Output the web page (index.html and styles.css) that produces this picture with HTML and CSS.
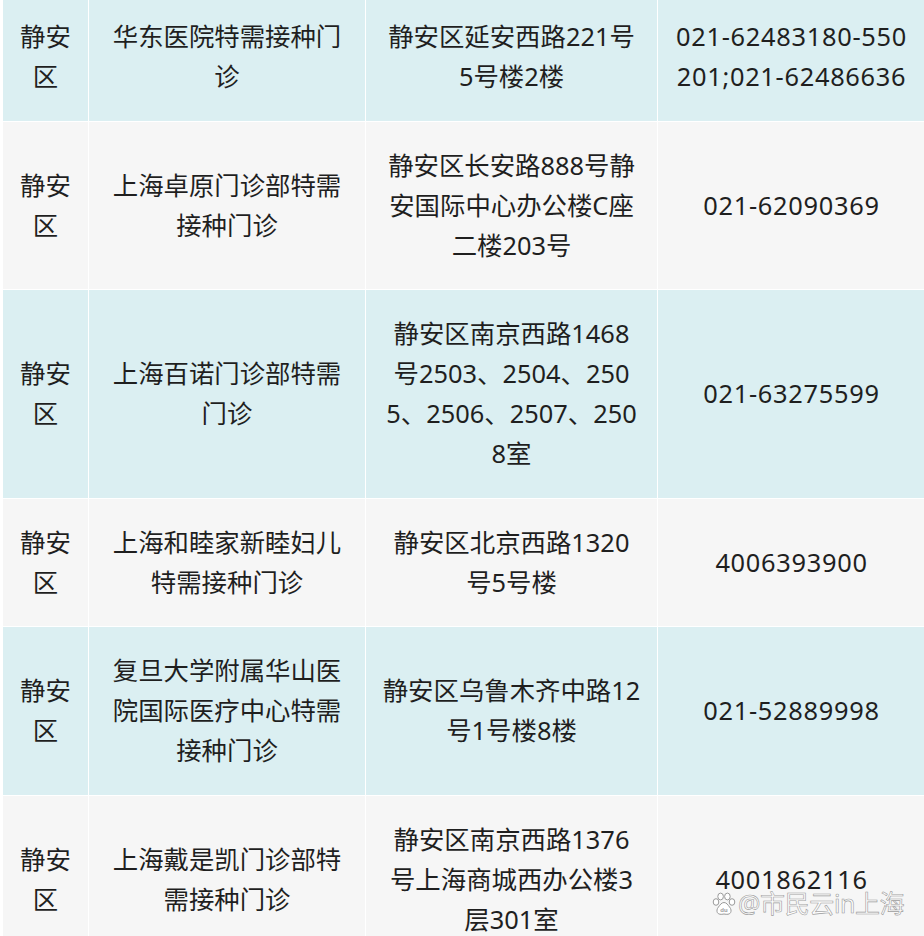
FILE: index.html
```html
<!DOCTYPE html>
<html lang="zh-CN">
<head>
<meta charset="utf-8">
<title>静安区特需接种门诊</title>
<link rel="stylesheet" href="styles.css">
</head>
<body>
<div class="page">
  <table class="clinics">
    <colgroup>
      <col class="c-district">
      <col class="c-name">
      <col class="c-addr">
      <col class="c-phone">
    </colgroup>
    <tbody>
      <tr class="teal">
        <td>静安<br>区</td>
        <td>华东医院特需接种门<br>诊</td>
        <td>静安区延安西路221号<br>5号楼2楼</td>
        <td class="phone">021-62483180-550<br>201;021-62486636</td>
      </tr>
      <tr class="gray">
        <td>静安<br>区</td>
        <td>上海卓原门诊部特需<br>接种门诊</td>
        <td>静安区长安路888号静<br>安国际中心办公楼C座<br>二楼203号</td>
        <td class="phone">021-62090369</td>
      </tr>
      <tr class="teal">
        <td>静安<br>区</td>
        <td>上海百诺门诊部特需<br>门诊</td>
        <td>静安区南京西路1468<br>号2503、2504、250<br>5、2506、2507、250<br>8室</td>
        <td class="phone">021-63275599</td>
      </tr>
      <tr class="gray">
        <td>静安<br>区</td>
        <td>上海和睦家新睦妇儿<br>特需接种门诊</td>
        <td>静安区北京西路1320<br>号5号楼</td>
        <td class="phone">4006393900</td>
      </tr>
      <tr class="teal">
        <td>静安<br>区</td>
        <td>复旦大学附属华山医<br>院国际医疗中心特需<br>接种门诊</td>
        <td>静安区乌鲁木齐中路12<br>号1号楼8楼</td>
        <td class="phone">021-52889998</td>
      </tr>
      <tr class="gray">
        <td>静安<br>区</td>
        <td>上海戴是凯门诊部特<br>需接种门诊</td>
        <td>静安区南京西路1376<br>号上海商城西办公楼3<br>层301室</td>
        <td class="phone">4001862116</td>
      </tr>
    </tbody>
  </table>
  <div class="watermark">
    <svg class="paw" viewBox="0 0 24 24" width="24" height="24" aria-hidden="true">
      <g fill="#fff" stroke="#9a9a9a" stroke-width="1">
        <ellipse cx="4" cy="10" rx="2.8" ry="3.3"/>
        <ellipse cx="8.6" cy="4.5" rx="2.8" ry="3.4"/>
        <ellipse cx="15.4" cy="4.5" rx="2.8" ry="3.4"/>
        <ellipse cx="20" cy="10" rx="2.8" ry="3.3"/>
        <path d="M12 10.5c-2.6 0-4 2.6-5.6 4.6C4.8 17 4.6 19 5.4 20.6 6.4 22.5 9 22.6 12 22c3 .6 5.6.5 6.6-1.4.8-1.6.6-3.6-1-5.5-1.6-2-3-4.6-5.6-4.6z"/>
      </g>
      <text x="12" y="20.2" text-anchor="middle" class="paw-text">du</text>
    </svg>
    <span class="wm-text">@市民云in上海</span>
  </div>
</div>
</body>
</html>
```

FILE: styles.css
```css
html, body {
  margin: 0;
  padding: 0;
  background: #ffffff;
}

.page {
  position: relative;
  width: 924px;
  height: 936px;
  overflow: hidden;
}

.clinics {
  margin-top: -8px;
  margin-left: 2px;
  border-collapse: collapse;
  table-layout: fixed;
  width: 923px;
  font-family: "Noto Sans", "Noto Sans CJK SC", sans-serif;
  font-size: 25.4px;
  line-height: 40px;
  color: #1f1f1f;
}

.c-district { width: 86px; }
.c-name { width: 277px; }
.c-addr { width: 292px; }
.c-phone { width: 268px; }

.clinics td {
  border: 1px solid #ffffff;
  padding: 23px 2px 24.6px;
  text-align: center;
  vertical-align: middle;
  white-space: nowrap;
}

.clinics td.phone {
  letter-spacing: 0.7px;
}

.teal td { background: #dbeff2; }
.gray td { background: #f6f6f6; }

.watermark {
  position: absolute;
  left: 712px;
  top: 891px;
  display: flex;
  align-items: center;
  gap: 2px;
}

.paw { display: block; }

.paw-text {
  font-family: "Liberation Sans", sans-serif;
  font-size: 6px;
  font-weight: bold;
  fill: #9a9a9a;
}

.wm-text {
  font-family: "Noto Sans", "Noto Sans CJK SC", sans-serif;
  font-size: 25px;
  line-height: 25px;
  color: #ffffff;
  -webkit-text-stroke: 0.6px #9c9c9c;
  letter-spacing: -0.4px;
}
```
